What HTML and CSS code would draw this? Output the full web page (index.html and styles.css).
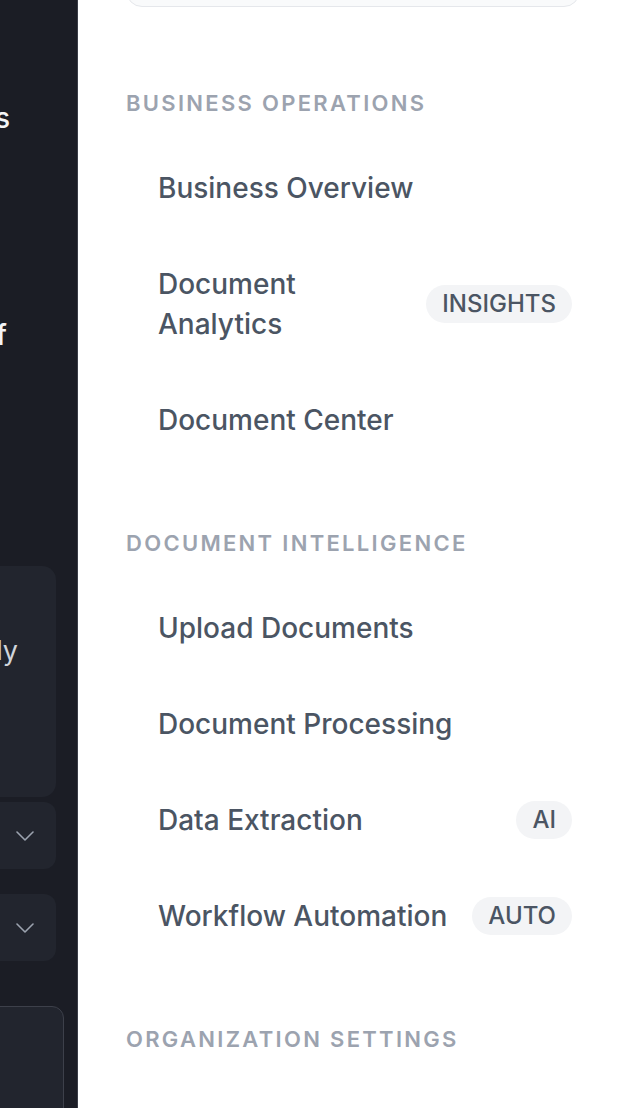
FILE: index.html
```html
<!DOCTYPE html>
<html lang="en">
<head>
<meta charset="utf-8">
<title>Sidebar</title>
<link rel="stylesheet" href="styles.css">
</head>
<body>
<div class="app">
  <aside class="rail">
    <div class="rail-inner">
      <div class="rail-title">Documents</div>
      <div class="rail-sub">Summary brief</div>
      <div class="rail-card">
        <div class="rail-card-text">Updated weekly</div>
      </div>
      <div class="rail-select">
        <svg class="chev" width="18" height="10" viewBox="0 0 18 10" fill="none"><path d="M1 1l8 8 8-8" stroke="#9ca3af" stroke-width="1.6" stroke-linecap="round" stroke-linejoin="round"/></svg>
      </div>
      <div class="rail-select second">
        <svg class="chev" width="18" height="10" viewBox="0 0 18 10" fill="none"><path d="M1 1l8 8 8-8" stroke="#9ca3af" stroke-width="1.6" stroke-linecap="round" stroke-linejoin="round"/></svg>
      </div>
      <div class="rail-box"></div>
    </div>
  </aside>
  <nav class="panel">
    <div class="search"></div>

    <div class="section-title first">Business Operations</div>
    <div class="item"><span class="label">Business Overview</span></div>
    <div class="item"><span class="label">Document Analytics</span><span class="badge">INSIGHTS</span></div>
    <div class="item"><span class="label">Document Center</span></div>

    <div class="section-title">Document Intelligence</div>
    <div class="item"><span class="label">Upload Documents</span></div>
    <div class="item"><span class="label">Document Processing</span></div>
    <div class="item"><span class="label">Data Extraction</span><span class="badge">AI</span></div>
    <div class="item"><span class="label">Workflow Automation</span><span class="badge">AUTO</span></div>

    <div class="section-title">Organization Settings</div>
  </nav>
</div>
</body>
</html>
```

FILE: styles.css
```css
* { box-sizing: border-box; }
html, body {
  margin: 0;
  padding: 0;
  width: 628px;
  height: 1108px;
  overflow: hidden;
  background: #ffffff;
  font-family: Inter, "Noto Sans", "Liberation Sans", sans-serif;
}
.app {
  display: flex;
  height: 1108px;
}
.rail {
  width: 78px;
  flex-shrink: 0;
  background: #1b1d25;
  border-right: 1px solid #3a3d47;
  overflow: hidden;
}
.rail-inner {
  margin-left: -300px;
  width: 356px;
  display: flex;
  flex-direction: column;
}
.rail-title {
  margin-top: 98px;
  height: 40px;
  line-height: 40px;
  font-size: 28px;
  font-weight: 500;
  color: #f3f4f6;
  text-align: right;
  padding-right: 46px;
  white-space: nowrap;
}
.rail-sub {
  margin-top: 177px;
  height: 40px;
  line-height: 40px;
  font-size: 28px;
  font-weight: 500;
  color: #f3f4f6;
  text-align: right;
  padding-right: 49px;
  white-space: nowrap;
}
.rail-card {
  margin-top: 211px;
  height: 231px;
  background: #22252e;
  border-radius: 14px;
  padding-top: 65px;
}
.rail-card-text {
  height: 40px;
  line-height: 40px;
  font-size: 27px;
  color: #d1d5db;
  text-align: right;
  padding-right: 38px;
  white-space: nowrap;
}
.rail-select {
  margin-top: 5px;
  height: 67px;
  background: #22252e;
  border-radius: 12px;
  display: flex;
  align-items: center;
  justify-content: flex-end;
  padding-right: 22px;
}
.rail-select.second { margin-top: 25px; }
.chev { display: block; }
.rail-box {
  margin-top: 45px;
  width: 364px;
  height: 200px;
  background: #22252e;
  border: 1px solid #3d404a;
  border-radius: 12px;
}

.panel {
  flex: 1;
  padding: 0 48px;
  display: flex;
  flex-direction: column;
}
.search {
  margin-top: -44px;
  height: 51px;
  border: 1px solid #e5e7eb;
  background: #f9fafb;
  border-radius: 16px;
}
.section-title {
  margin-top: 55px;
  margin-bottom: 17px;
  height: 40px;
  line-height: 40px;
  font-size: 22px;
  font-weight: 600;
  letter-spacing: 2.3px;
  text-transform: uppercase;
  color: #9ca3af;
  white-space: nowrap;
}
.section-title.first { margin-top: 76px; }
.item {
  min-height: 96px;
  display: flex;
  align-items: center;
  gap: 16px;
  padding: 28px 8px 28px 32px;
}
.label {
  flex: 1;
  min-width: 0;
  font-size: 28px;
  line-height: 40px;
  font-weight: 500;
  color: #4b5563;
}
.badge {
  flex-shrink: 0;
  height: 38px;
  line-height: 38px;
  padding: 0 16px;
  border-radius: 19px;
  background: #f3f4f6;
  color: #4b5563;
  font-size: 24px;
  font-weight: 500;
}
```
